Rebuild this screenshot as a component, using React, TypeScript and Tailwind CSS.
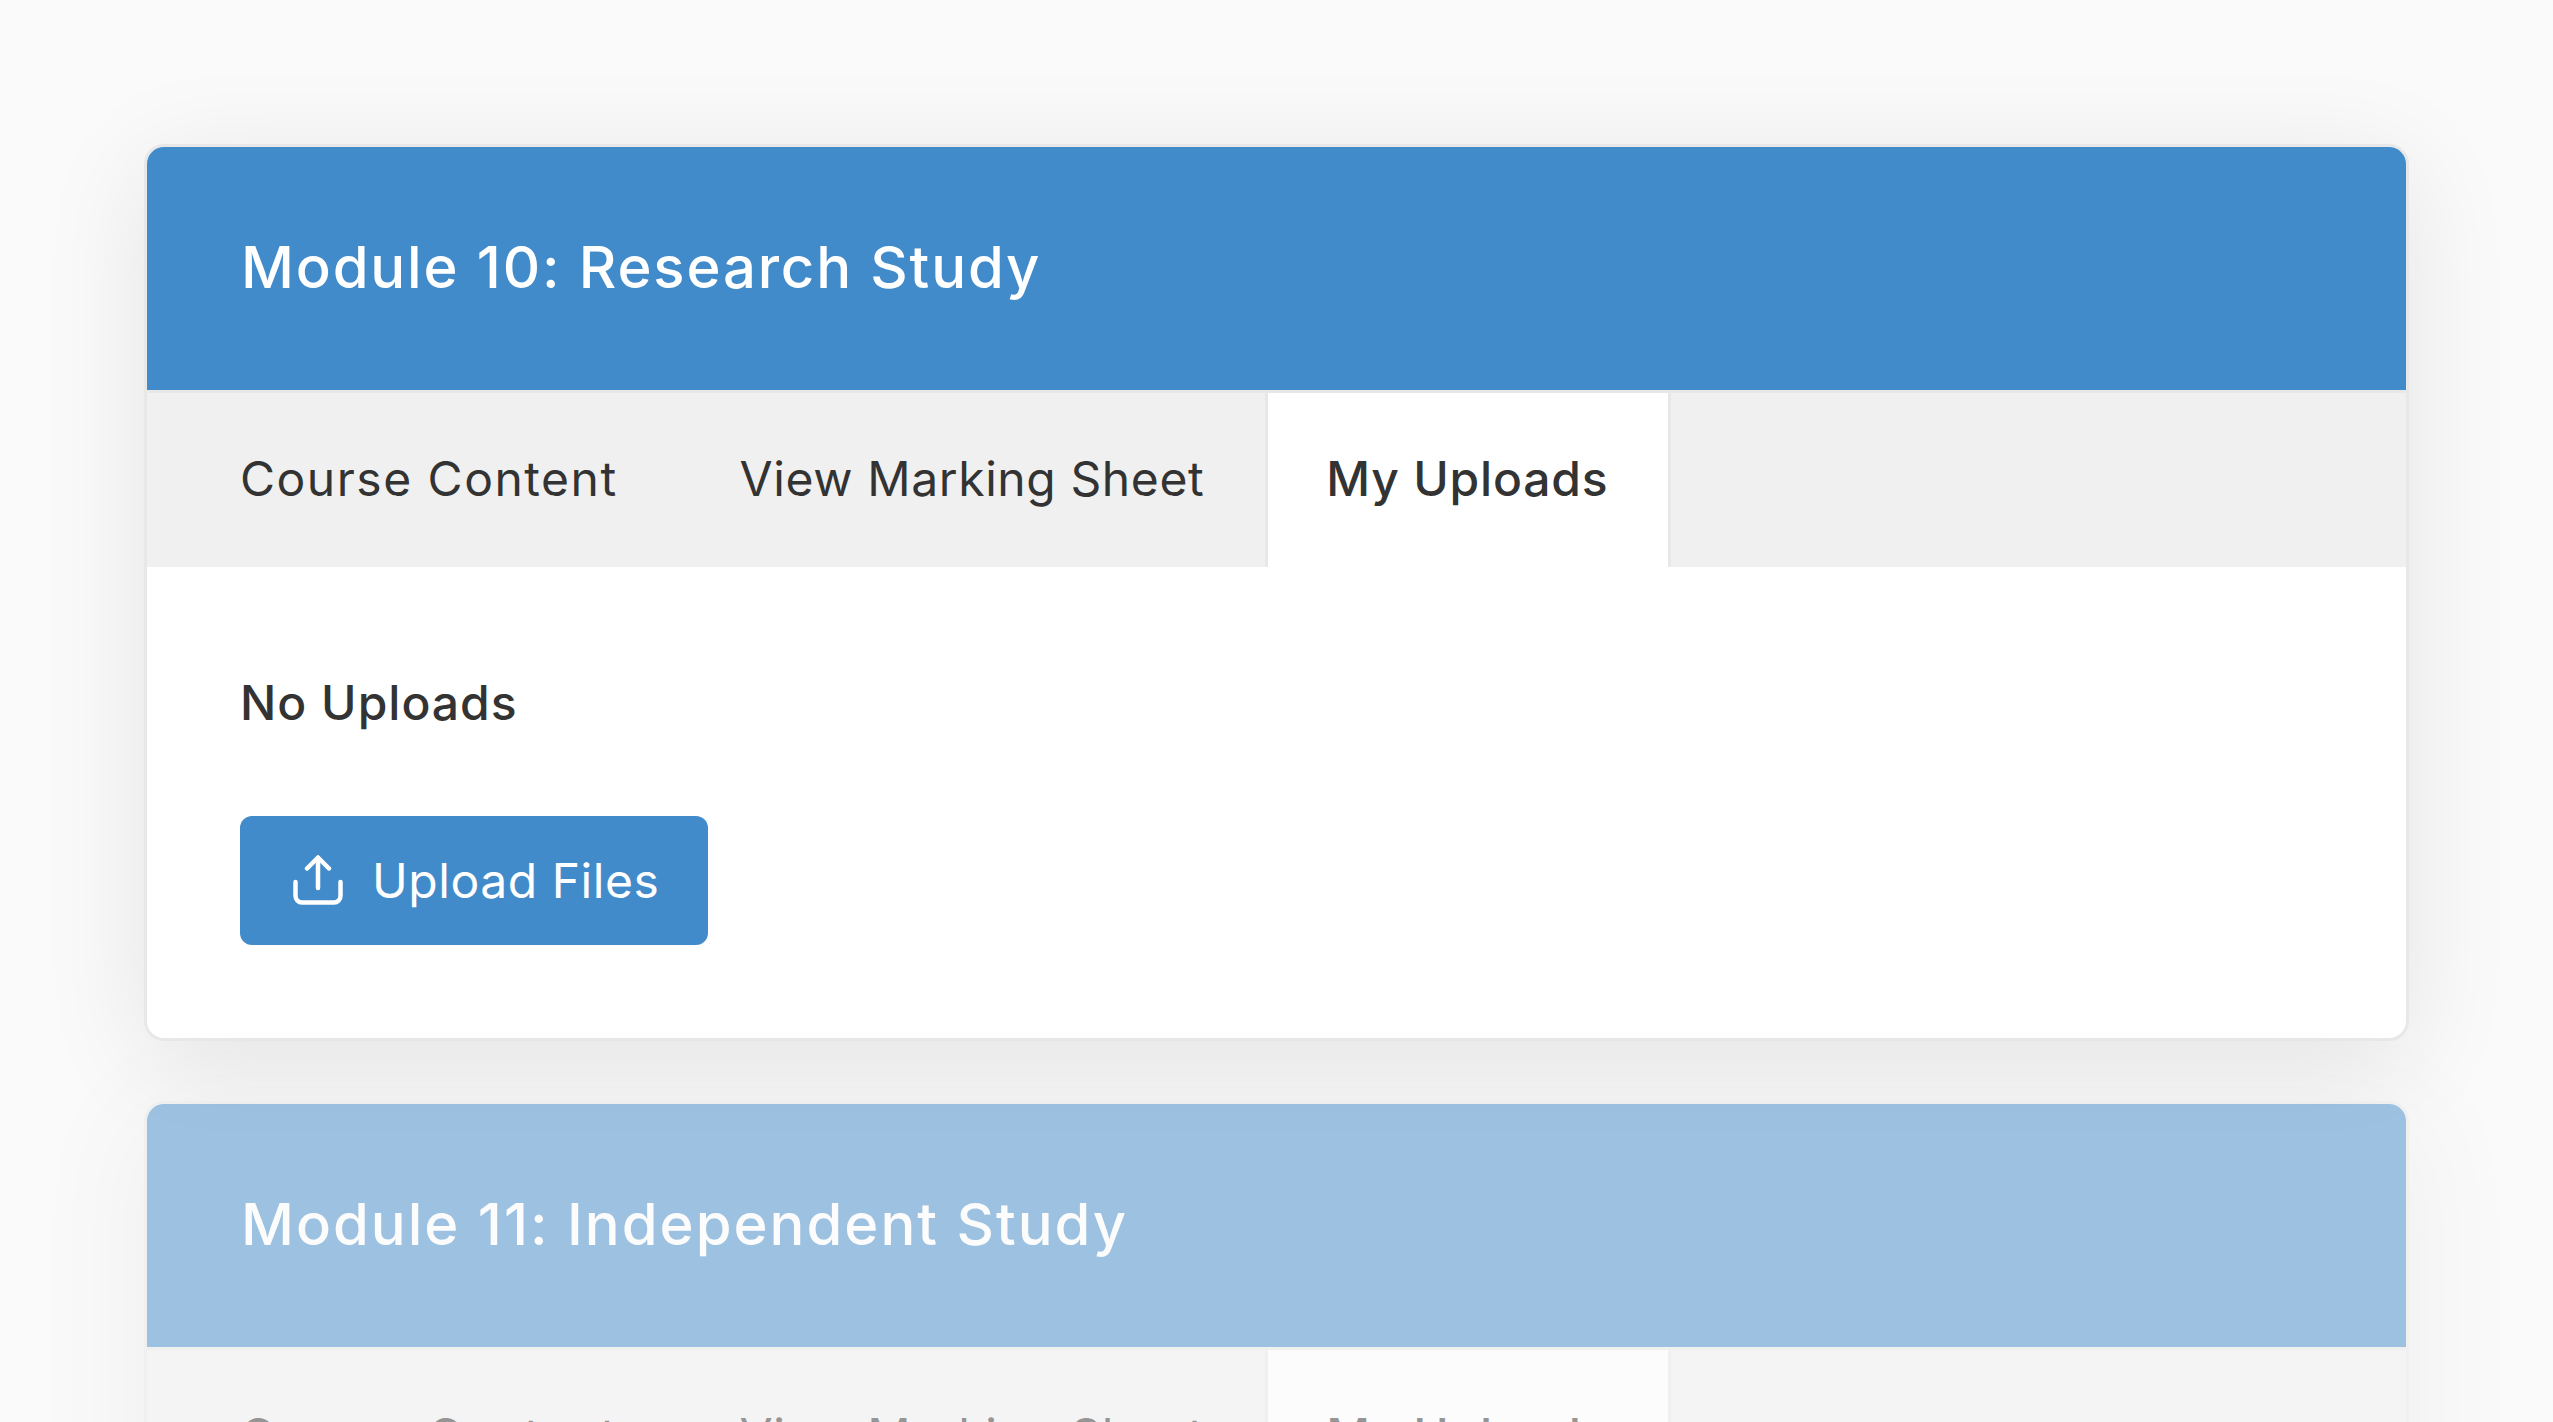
const font = "font-['Inter','Noto_Sans',sans-serif]";

function UploadIcon() {
  return (
    <svg width="50" height="51" viewBox="0 0 50 51" fill="none" stroke="currentColor" strokeWidth="4.5" strokeLinecap="round" strokeLinejoin="round">
      <path d="M2.5 27V41a6.5 6.5 0 0 0 6.5 6.5H41a6.5 6.5 0 0 0 6.5-6.5V27" />
      <path d="M25 33V3" />
      <path d="M14 13.5 25 2.5l11 11" />
    </svg>
  );
}

function ModuleCard({ title, dimmed }: { title: string; dimmed?: boolean }) {
  return (
    <div className={`shrink-0 rounded-[20px] border-[3px] border-[#e8e8e8] bg-white overflow-hidden shadow-[0_20px_110px_rgba(0,0,0,0.09)] ${dimmed ? "opacity-50" : ""}`}>
      <div className="h-[243px] bg-[#428bca] pl-[94px] flex items-center">
        <h2 className={`text-[58px] font-medium text-white leading-none pb-[3px] ${dimmed ? "tracking-[2px]" : "tracking-[1.85px]"}`}>{title}</h2>
      </div>
      <div className="h-[177px] bg-[#f0f0f0] border-t-[3px] border-[#e8e8e8] flex pl-[32px]">
        <div className="px-[61px] pb-[3px] flex items-center text-[48px] text-[#333333] tracking-[1.5px]">Course Content</div>
        <div className="px-[61px] pb-[3px] flex items-center text-[48px] text-[#333333] tracking-[0.6px]">View Marking Sheet</div>
        <div className="pl-[58px] pr-[60px] pb-[3px] flex items-center bg-white border-x-[3px] border-[#e8e8e8] text-[48px] font-medium text-[#333333] tracking-[0.8px]">My Uploads</div>
      </div>
      <div className="px-[93px] pt-[110px] pb-[93px]">
        <p className="text-[48px] font-medium text-[#333333] leading-[52px] tracking-[1px]">No Uploads</p>
        <button className="mt-[87px] h-[129px] w-[468px] pl-[53px] rounded-[12px] bg-[#428bca] text-white flex items-center gap-[29px]">
          <UploadIcon />
          <span className="text-[48px] tracking-[0.55px]">Upload Files</span>
        </button>
      </div>
    </div>
  );
}

export default function App() {
  return (
    <main className={`h-[1422px] overflow-hidden bg-[#fafafa] px-[144px] pt-[144px] flex flex-col gap-[60px] ${font}`}>
      <ModuleCard title="Module 10: Research Study" />
      <ModuleCard title="Module 11: Independent Study" dimmed />
    </main>
  );
}
